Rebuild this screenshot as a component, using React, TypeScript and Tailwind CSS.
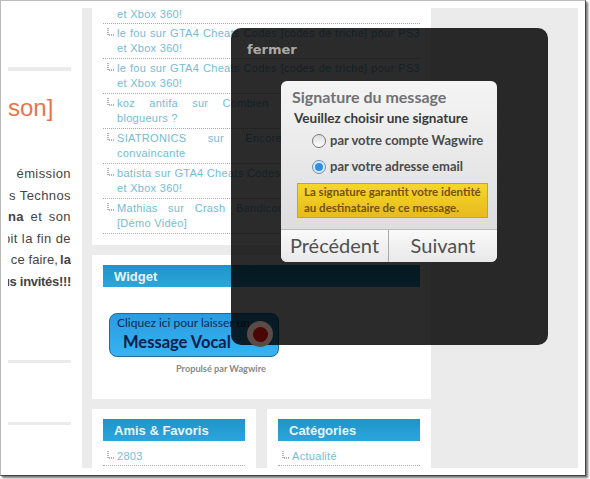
const rows = [
  ["le fou sur GTA4 Cheats Codes [codes de triche] pour PS3", "et Xbox 360!"],
  ["le fou sur GTA4 Cheats Codes [codes de triche] pour PS3", "et Xbox 360!"],
  ["koz antifa sur Combien le Web rapporte aux", "blogueurs ?"],
  ["SIATRONICS sur Encore une preuve peu", "convaincante"],
  ["batista sur GTA4 Cheats Codes [codes de triche] pour PS3", "et Xbox 360!"],
  ["Mathias sur Crash Bandicoot débarque sur iPhone", "[Démo Vidéo]"],
];

function Tick() {
  return (
    <svg width="8" height="8" viewBox="0 0 8 8" className="absolute left-[4px] top-[4px]">
      <path d="M1 0v7h6" fill="none" stroke="#666" strokeWidth="1" strokeDasharray="1 1" />
    </svg>
  );
}

function CommentRow({ lines }: { lines: string[] }) {
  return (
    <li className="relative h-[35px] border-b border-dotted border-[#aaa] pt-[2px] pl-[14px] leading-[15px]">
      <Tick />
      <div className="whitespace-nowrap [text-align-last:justify]">{lines[0]}</div>
      <div>{lines[1]}</div>
    </li>
  );
}

function BoxTitle({ children }: { children: string }) {
  return (
    <h3 className="h-[22px] bg-gradient-to-b from-[#1f94c8] to-[#2ba6dc] pl-[11px] text-[13px] leading-[24px] font-bold text-[#e8f6fc]">
      {children}
    </h3>
  );
}

function Radio({ checked, label }: { checked?: boolean; label: string }) {
  return (
    <div className="flex h-[26px] items-center gap-[4px] pl-[31px] text-[13px] font-bold text-[#4a4a4a]">
      {checked ? (
        <span className="flex h-[14px] w-[14px] items-center justify-center rounded-full border border-[#6a8fb5] bg-[#dcebf7]">
          <span className="h-[8px] w-[8px] rounded-full bg-[#2f8fe0]" />
        </span>
      ) : (
        <span className="h-[14px] w-[14px] rounded-full border border-[#777] bg-gradient-to-b from-[#ddd] to-white" />
      )}
      {label}
    </div>
  );
}

export default function App() {
  return (
    <div className="relative h-[479px] w-[590px] overflow-hidden bg-white font-['Liberation_Sans',Arial,sans-serif]">
      <div className="flex h-[476px] w-[586px] border border-[#bbb] border-r-[#444] border-b-[#444] bg-white py-[7px] pr-[7px] shadow-[2px_2px_2px_#777]">
        {/* article column */}
        <div className="flex w-[81px] shrink-0 flex-col pl-[7px] pr-[11px]">
          <div className="mt-[59px] h-[4px] bg-[#ebebeb]" />
          <div className="mt-[22px] text-[24px] leading-[30px] text-[#e8734a]">son]</div>
          <div className="mt-[40px] flex flex-col overflow-hidden text-[13px] leading-[21.5px] tracking-[0.4px] text-[#444]">
            <div className="flex justify-end whitespace-nowrap">émission</div>
            <div className="flex justify-end whitespace-nowrap">s Technos</div>
            <div className="flex justify-between whitespace-nowrap">
              <b>na</b>
              <span>et</span>
              <span>son</span>
            </div>
            <div className="flex justify-end whitespace-nowrap">oit la fin de</div>
            <div className="flex justify-end gap-[2px] tracking-[0.1px] whitespace-nowrap">
              ce faire, <b>la</b>
            </div>
            <div className="flex justify-end font-bold tracking-[-0.3px] whitespace-nowrap">us invités!!!</div>
          </div>
          <div className="mt-[68px] h-[3px] bg-[#ebebeb]" />
          <div className="mt-[59px] h-[3px] bg-[#ebebeb]" />
        </div>

        {/* sidebar */}
        <div className="flex flex-1 bg-[#ebebeb] pl-[10px]">
          <div className="flex w-[339px] flex-col gap-[10px]">
            <div className="h-[237px] overflow-hidden bg-white px-[11px] text-[11px] tracking-[0.3px] text-[#74bcd6]">
              <div className="h-[16px] border-b border-dotted border-[#aaa] pl-[14px] leading-[13px]">et Xbox 360!</div>
              <ul>
                {rows.map((lines, i) => (
                  <CommentRow key={i} lines={lines} />
                ))}
              </ul>
            </div>
            <div className="h-[144px] bg-white px-[11px] pt-[10px]">
              <BoxTitle>Widget</BoxTitle>
              <div className="mt-[26px] ml-[6px] flex h-[44px] w-[170px] flex-col rounded-[8px] border border-[#1b6d9c] bg-gradient-to-b from-[#2a9be0] to-[#35b4f4] pl-[7px] font-['Lato',sans-serif] text-[#0b2a55]">
                <span className="pt-[1px] text-[12px] leading-[16px] whitespace-nowrap">Cliquez ici pour laisser un</span>
                <span className="pl-[6px] text-[16.5px] leading-[22px] font-bold whitespace-nowrap text-[#08204a]">Message Vocal</span>
              </div>
              <p className="mt-[5px] ml-[73px] font-['Lato',sans-serif] text-[9.2px] leading-[14px] font-bold text-[#888]">Propulsé par Wagwire</p>
            </div>
            <div className="flex flex-1 gap-[11px]">
              <div className="w-[164px] overflow-hidden bg-white px-[11px] pt-[10px]">
                <BoxTitle>Amis & Favoris</BoxTitle>
                <div className="relative mt-[6px] border-b border-dotted border-[#aaa] pl-[14px] text-[11px] leading-[18px] tracking-[0.3px] text-[#74bcd6]">
                  <Tick />2803
                </div>
              </div>
              <div className="flex-1 overflow-hidden bg-white px-[11px] pt-[10px]">
                <BoxTitle>Catégories</BoxTitle>
                <div className="relative mt-[6px] border-b border-dotted border-[#aaa] pl-[14px] text-[11px] leading-[18px] tracking-[0.3px] text-[#74bcd6]">
                  <Tick />Actualité
                </div>
              </div>
            </div>
          </div>
        </div>
      </div>

      {/* modal overlay */}
      <div className="absolute left-[231px] top-[28px] h-[317px] w-[317px] rounded-[10px] bg-black/[0.83]">
        <div className="pl-[16px] pt-[12px] font-['DejaVu_Sans',sans-serif] text-[13px] font-bold text-[#aaa]">fermer</div>
        <div className="absolute left-[50px] top-[53px] flex h-[181px] w-[216px] flex-col overflow-hidden rounded-[6px] bg-gradient-to-b from-[#f5f5f5] to-[#d8d8d8] font-['Lato',sans-serif]">
          <div className="pl-[11px] pt-[5px] text-[16px] leading-[22px] font-bold text-[#707174]">Signature du message</div>
          <div className="pl-[13px] pt-[1px] text-[13.5px] leading-[19px] font-bold text-[#3a3a3a]">Veuillez choisir une signature</div>
          <Radio label="par votre compte Wagwire" />
          <Radio checked label="par votre adresse email" />
          <div className="mt-[3px] mr-[9px] ml-[16px] h-[35px] border border-[#c9a520] bg-gradient-to-b from-[#f7d62a] to-[#e6bb1c] pl-[6px] text-[11.5px] leading-[16px] font-bold whitespace-nowrap text-[#75520f]">
            La signature garantit votre identité
            <br />
            au destinataire de ce message.
          </div>
          <div className="mt-auto flex h-[33px] border-t border-[#bbb] text-[20px] leading-[31px] text-[#505050]">
            <div className="flex-1 border-r border-[#aaa] bg-gradient-to-b from-[#fafafa] to-[#e8e8e8] text-center">Précédent</div>
            <div className="w-[108px] bg-gradient-to-b from-[#fafafa] to-[#e8e8e8] text-center">Suivant</div>
          </div>
        </div>
      </div>
      {/* record dot */}
      <div className="absolute left-[247px] top-[321px] flex h-[26px] w-[26px] items-center justify-center rounded-full bg-[#5a4c45] blur-[0.5px]">
        <span className="h-[15px] w-[15px] rounded-full bg-[#4a0505]" />
      </div>
    </div>
  );
}
